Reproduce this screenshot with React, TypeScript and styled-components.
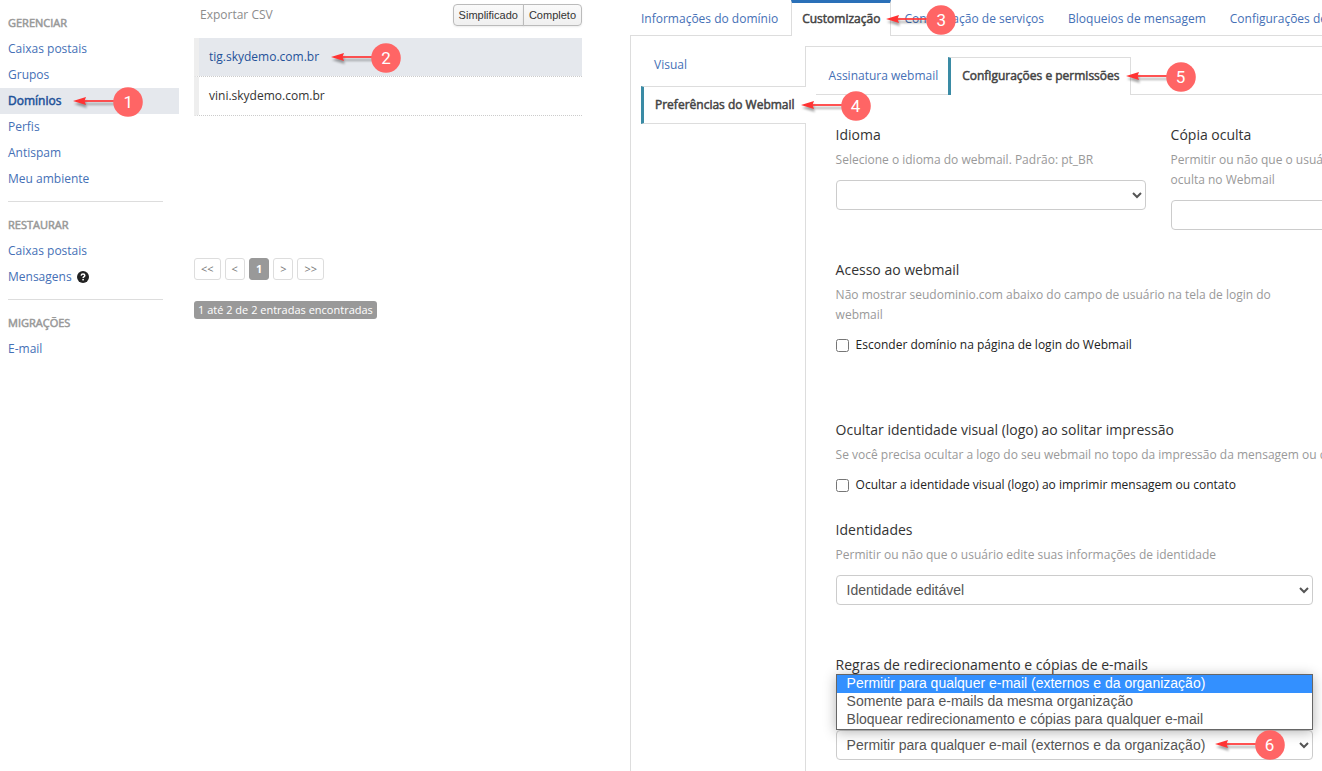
import React, { useState } from "react";
import styled, { createGlobalStyle, css } from "styled-components";

const LINE = "#dddddd";
const LINK = "#4570b6";
const SANS = `"Open Sans", "Noto Sans", sans-serif`;
const ARIAL = `"Liberation Sans", Arial, sans-serif`;

/* Thickens the regular face without changing its widths. */
const emphasis = css`
  -webkit-text-stroke: 0.5px currentColor;
`;

const GlobalStyle = createGlobalStyle`
  *, *::before, *::after { box-sizing: border-box; }
  body {
    margin: 0;
    background: #fff;
    color: #333;
    font: 400 12px/20px ${SANS};
    overflow-x: hidden;
  }
  a { text-decoration: none; color: ${LINK}; }
  ul, h2, h3, p { margin: 0; padding: 0; list-style: none; font-weight: inherit; }
`;

const Page = styled.div`
  display: grid;
  grid-template-columns: 179px minmax(0, 388px) minmax(0, 1fr);
  min-height: 100vh;
`;

/* Callouts */

const Anchor = styled.span`
  position: relative;
  display: inline-block;
  white-space: nowrap;
`;

const CalloutBox = styled.span<{ $gap: number }>`
  position: absolute;
  z-index: 5;
  left: 100%;
  top: 50%;
  display: block;
  width: 70px;
  height: 30px;
  margin-left: ${(p) => p.$gap}px;
  transform: translateY(-14px);
  pointer-events: none;
  -webkit-text-stroke: 0;
`;

const CalloutArt = styled.svg`
  display: block;
  width: 100%;
  height: 100%;
  overflow: visible;
`;

const CalloutNumber = styled.span`
  position: absolute;
  right: 0;
  top: 0;
  width: 30px;
  font: 400 17px/30px Roboto, sans-serif;
  text-align: center;
  color: #fff;
`;

function Callout({ n, gap }: { n: number; gap: number }) {
  return (
    <CalloutBox $gap={gap}>
      <CalloutArt viewBox="0 0 70 30" aria-hidden="true">
        <g style={{ filter: "drop-shadow(1px 3px 1px rgba(0,0,0,.35))" }}>
          <path d="M11 14H42" stroke="#ff3333" strokeWidth="1.7" />
          <path d="M0 14L13 10L11.500 14L13 18Z" fill="#ff3333" />
        </g>
        <circle cx="55" cy="15" r="14.8" fill="#ff6565" />
      </CalloutArt>
      <CalloutNumber>{n}</CalloutNumber>
    </CalloutBox>
  );
}

/* Sidebar */

const Sidebar = styled.nav`
  padding-top: 10px;
`;

const MenuGroup = styled.section`
  &:not(:last-child)::after {
    content: "";
    display: block;
    height: 1px;
    margin: 9px 16px 10px 8px;
    background: ${LINE};
  }
`;

const MenuTitle = styled.h2`
  && { padding: 0 8px; }
  font-size: 11px;
  line-height: 26px;
  color: #999;
  ${emphasis}
`;

const MenuLink = styled.a<{ $active?: boolean }>`
  display: flex;
  align-items: center;
  gap: 5px;
  padding: 0 8px;
  line-height: 26px;
  ${(p) =>
    p.$active &&
    css`
      background: #e5e8ed;
      color: #1f5299;
      ${emphasis}
    `}
`;

function HelpIcon() {
  return (
    <svg width="12" height="12" viewBox="0 0 12 12" role="img" aria-label="Ajuda">
      <circle cx="6" cy="6" r="6" fill="#222" />
      <path d="M4.2 4.6C4.3 3.4 5.1 3 6 3c1 0 1.8.6 1.8 1.5C7.800 5.700 6.100 5.600 6.100 7" fill="none" stroke="#fff" strokeWidth="1.5" />
      <rect x="5.300" y="7.900" width="1.600" height="1.500" fill="#fff" />
    </svg>
  );
}

/* Domain list */

const ListPanel = styled.main`
  padding-left: 15px;
  margin-right: -15px;
`;

const Toolbar = styled.div`
  display: flex;
  justify-content: space-between;
  align-items: center;
  height: 38px;
  padding: 0 0 8px 6px;
`;

const ExportLink = styled.a`
  color: #8c8c8c;
`;

const ButtonGroup = styled.div`
  display: flex;
`;

const ViewButton = styled.button`
  height: 22px;
  padding: 0 5px;
  border: 1px solid #bbb;
  background: linear-gradient(#fafafa, #f0f0f0);
  box-shadow: 0 1px 2px rgba(0, 0, 0, 0.08);
  color: #333;
  font: 400 11px/20px ${ARIAL};
  &:first-child { border-radius: 4px 0 0 4px; }
  &:last-child { border-radius: 0 4px 4px 0; margin-left: -1px; }
`;

const DomainTable = styled.table`
  width: 100%;
  border-spacing: 0;
`;

const DomainCell = styled.td<{ $selected?: boolean }>`
  height: 39px;
  padding: 0 0 1px 10px;
  border-left: 5px solid #eee;
  border-bottom: 1px dotted #ccc;
  background: ${(p) => (p.$selected ? "#e5e8ed" : "#fff")};
  background-clip: padding-box;
  a { color: ${(p) => (p.$selected ? "#1f5299" : "#333")}; }
`;

const Pager = styled.div`
  display: flex;
  gap: 4px;
  margin: 142px 0 21px;
`;

const PageButton = styled.button<{ $current?: boolean }>`
  height: 22px;
  padding: 0 6px;
  border: 1px solid ${(p) => (p.$current ? "#999" : LINE)};
  border-radius: 3px;
  background: ${(p) => (p.$current ? "#999" : "#fff")};
  color: ${(p) => (p.$current ? "#fff" : "#777")};
  font: ${(p) => (p.$current ? 700 : 400)} 11px/20px ${SANS};
`;

const Summary = styled.p`
  width: fit-content;
  && { padding: 0 4px; }
  border-radius: 3px;
  background: #999;
  color: #fff;
  font-size: 11px;
  line-height: 18px;
`;

/* Domain detail */

const Detail = styled.section`
  display: flex;
  flex-direction: column;
  margin-left: 63px;
  overflow: hidden;
`;

const Tabs = styled.nav`
  display: flex;
  gap: 2px;
  height: 36px;
  box-shadow: inset 0 -1px ${LINE};
`;

const Tab = styled.a<{ $active?: boolean }>`
  flex: none;
  padding: 6px 10px 0;
  border: solid transparent;
  border-width: 3px 1px 0;
  white-space: nowrap;
  ${(p) =>
    p.$active &&
    css`
      border-color: #2a70b8 ${LINE};
      background: #fff;
      color: #444;
      ${emphasis}
    `}
`;

const Body = styled.div`
  flex: 1;
  display: flex;
  padding: 10px 0 0 10px;
  border-left: 1px solid ${LINE};
`;

const SideTabs = styled.nav`
  position: relative;
  z-index: 1;
  flex: none;
  margin-right: -1px;
`;

const SideTab = styled.a<{ $active?: boolean }>`
  display: block;
  height: 40px;
  padding: 9px 11px 0 13px;
  ${(p) =>
    p.$active &&
    css`
      height: 38px;
      padding: 8px 11px 0;
      border: solid ${LINE};
      border-width: 1px 0;
      border-left: 3px solid #3a8ba5;
      background: #fff;
      color: #444;
      ${emphasis}
    `}
`;

const Content = styled.div`
  flex: 1;
  min-width: 0;
  padding: 10px 0 0 10px;
  border: solid ${LINE};
  border-width: 1px 0 0 1px;
`;

const SubTabs = styled.nav`
  display: flex;
  height: 38px;
  box-shadow: inset 0 -1px ${LINE};
`;

const SubTab = styled.a<{ $active?: boolean }>`
  padding: 9px 10px 0 13px;
  white-space: nowrap;
  ${(p) =>
    p.$active &&
    css`
      padding: 8px 10px 0 11px;
      border: 1px solid ${LINE};
      border-bottom: 0;
      border-left: 3px solid #3a8ba5;
      background: #fff;
      color: #444;
      ${emphasis}
    `}
`;

const Form = styled.form`
  padding: 30px 0 10px 20px;
`;

const FieldRow = styled.div`
  display: grid;
  grid-template-columns: 310px 310px;
  gap: 25px;
  margin-bottom: 30px;
`;

const Field = styled.div<{ $after?: number }>`
  max-width: 477px;
  margin-bottom: ${(p) => p.$after ?? 0}px;
`;

const FieldTitle = styled.label`
  display: block;
  font-size: 14px;
`;

const Hint = styled.p<{ $oneLine?: boolean }>`
  && { margin: 5px 0 10px; }
  color: #999;
  white-space: ${(p) => (p.$oneLine ? "nowrap" : "normal")};
`;

const Select = styled.select`
  display: block;
  width: 100%;
  height: 30px;
  padding: 0 0 0 6px;
  border: 1px solid #ccc;
  border-radius: 4px;
  background-color: #fff;
  color: #555;
  font: 400 14px/20px ${ARIAL};
`;

const CheckLabel = styled.label`
  display: flex;
  align-items: center;
  gap: 7px;
  color: #222;
`;

const Checkbox = styled.input.attrs({ type: "checkbox" })`
  width: 13px;
  height: 13px;
  margin: 1px 0 0;
`;

const OpenSelect = styled.div`
  position: relative;
  margin-top: 55px;
`;

const Options = styled.ul`
  position: absolute;
  z-index: 2;
  left: 0;
  right: 0;
  bottom: 100%;
  border: 1px solid #666;
  background: #fff;
  box-shadow: 0 2px 12px rgba(0, 0, 0, 0.3);
`;

const Option = styled.li<{ $selected: boolean }>`
  padding: 0 10px 2px;
  font: 400 14px/16px ${ARIAL};
  background: ${(p) => (p.$selected ? "#3390ff" : "#fff")};
  color: ${(p) => (p.$selected ? "#fff" : "#555")};
  cursor: default;
`;

const SelectNote = styled.span`
  position: absolute;
  left: 10px;
  top: 4px;
  width: 360px;
  height: 20px;
  pointer-events: none;
`;

const RULES = [
  "Permitir para qualquer e-mail (externos e da organização)",
  "Somente para e-mails da mesma organização",
  "Bloquear redirecionamento e cópias para qualquer e-mail",
];

export default function App() {
  const [rule, setRule] = useState(RULES[0]);

  return (
    <>
      <GlobalStyle />
      <Page>
        <Sidebar>
          <MenuGroup>
            <MenuTitle>GERENCIAR</MenuTitle>
            <MenuLink href="#">Caixas postais</MenuLink>
            <MenuLink href="#">Grupos</MenuLink>
            <MenuLink href="#" $active>
              <Anchor>
                Domínios
                <Callout n={1} gap={12} />
              </Anchor>
            </MenuLink>
            <MenuLink href="#">Perfis</MenuLink>
            <MenuLink href="#">Antispam</MenuLink>
            <MenuLink href="#">Meu ambiente</MenuLink>
          </MenuGroup>
          <MenuGroup>
            <MenuTitle>RESTAURAR</MenuTitle>
            <MenuLink href="#">Caixas postais</MenuLink>
            <MenuLink href="#">
              Mensagens <HelpIcon />
            </MenuLink>
          </MenuGroup>
          <MenuGroup>
            <MenuTitle>MIGRAÇÕES</MenuTitle>
            <MenuLink href="#">E-mail</MenuLink>
          </MenuGroup>
        </Sidebar>

        <ListPanel>
          <Toolbar>
            <ExportLink href="#">Exportar CSV</ExportLink>
            <ButtonGroup>
              <ViewButton type="button">Simplificado</ViewButton>
              <ViewButton type="button">Completo</ViewButton>
            </ButtonGroup>
          </Toolbar>
          <DomainTable>
            <tbody>
              <tr>
                <DomainCell $selected>
                  <Anchor>
                    <a href="#">tig.skydemo.com.br</a>
                    <Callout n={2} gap={12} />
                  </Anchor>
                </DomainCell>
              </tr>
              <tr>
                <DomainCell>
                  <a href="#">vini.skydemo.com.br</a>
                </DomainCell>
              </tr>
            </tbody>
          </DomainTable>
          <Pager>
            <PageButton type="button">&lt;&lt;</PageButton>
            <PageButton type="button">&lt;</PageButton>
            <PageButton type="button" $current>1</PageButton>
            <PageButton type="button">&gt;</PageButton>
            <PageButton type="button">&gt;&gt;</PageButton>
          </Pager>
          <Summary>1 até 2 de 2 entradas encontradas</Summary>
        </ListPanel>

        <Detail>
          <Tabs>
            <Tab href="#">Informações do domínio</Tab>
            <Tab href="#" $active>
              <Anchor>
                Customização
                <Callout n={3} gap={6} />
              </Anchor>
            </Tab>
            <Tab href="#">Configuração de serviços</Tab>
            <Tab href="#">Bloqueios de mensagem</Tab>
            <Tab href="#">Configurações de</Tab>
          </Tabs>
          <Body>
            <SideTabs>
              <SideTab href="#">Visual</SideTab>
              <SideTab href="#" $active>
                <Anchor>
                  Preferências do Webmail
                  <Callout n={4} gap={6} />
                </Anchor>
              </SideTab>
            </SideTabs>
            <Content>
              <SubTabs>
                <SubTab href="#">Assinatura webmail</SubTab>
                <SubTab href="#" $active>
                  <Anchor>
                    Configurações e permissões
                    <Callout n={5} gap={6} />
                  </Anchor>
                </SubTab>
              </SubTabs>
              <Form>
                <FieldRow>
                  <Field>
                    <FieldTitle htmlFor="idioma">Idioma</FieldTitle>
                    <Hint>Selecione o idioma do webmail. Padrão: pt_BR</Hint>
                    <Select id="idioma">
                      <option></option>
                    </Select>
                  </Field>
                  <Field>
                    <FieldTitle htmlFor="copia">Cópia oculta</FieldTitle>
                    <Hint>Permitir ou não que o usuário envie e-mail com cópia oculta no Webmail</Hint>
                    <Select id="copia">
                      <option></option>
                    </Select>
                  </Field>
                </FieldRow>
                <Field $after={65}>
                  <FieldTitle as="h3">Acesso ao webmail</FieldTitle>
                  <Hint>
                    Não mostrar seudominio.com abaixo do campo de usuário na tela de login do webmail
                  </Hint>
                  <CheckLabel>
                    <Checkbox />
                    Esconder domínio na página de login do Webmail
                  </CheckLabel>
                </Field>
                <Field $after={25}>
                  <FieldTitle as="h3">Ocultar identidade visual (logo) ao solitar impressão</FieldTitle>
                  <Hint $oneLine>
                    Se você precisa ocultar a logo do seu webmail no topo da impressão da mensagem ou contato
                  </Hint>
                  <CheckLabel>
                    <Checkbox />
                    Ocultar a identidade visual (logo) ao imprimir mensagem ou contato
                  </CheckLabel>
                </Field>
                <Field $after={50}>
                  <FieldTitle htmlFor="identidades">Identidades</FieldTitle>
                  <Hint>Permitir ou não que o usuário edite suas informações de identidade</Hint>
                  <Select id="identidades">
                    <option>Identidade editável</option>
                  </Select>
                </Field>
                <Field>
                  <FieldTitle htmlFor="regras">Regras de redirecionamento e cópias de e-mails</FieldTitle>
                  <OpenSelect>
                    <Options role="listbox" aria-label="Regras de redirecionamento">
                      {RULES.map((r) => (
                        <Option
                          key={r}
                          role="option"
                          aria-selected={r === rule}
                          $selected={r === rule}
                          onClick={() => setRule(r)}
                        >
                          {r}
                        </Option>
                      ))}
                    </Options>
                    <Select id="regras" value={rule} onChange={(e) => setRule(e.target.value)}>
                      {RULES.map((r) => (
                        <option key={r}>{r}</option>
                      ))}
                    </Select>
                    <SelectNote>
                      <Callout n={6} gap={9} />
                    </SelectNote>
                  </OpenSelect>
                </Field>
              </Form>
            </Content>
          </Body>
        </Detail>
      </Page>
    </>
  );
}
